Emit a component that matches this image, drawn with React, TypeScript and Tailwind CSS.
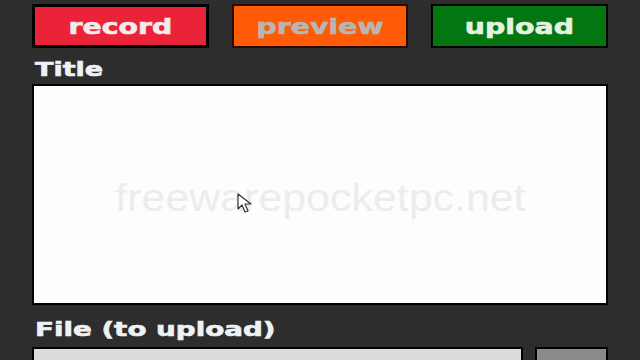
const btn = 'h-[44px] text-[21px] font-bold leading-none pt-[2px] [-webkit-text-stroke:0.6px_currentColor]';

const ButtonBar = () => (
  <div className="grid grid-cols-3 gap-[23px]">
    <button className={`${btn} bg-[#ea2338] border-[3px] border-black text-[#f2ecec]`}>
      <span className="inline-block scale-x-[1.35]">record</span>
    </button>
    <button className={`${btn} bg-[#ff5a06] border-2 border-[#2a0a00] text-[#b9b5b2]`}>
      <span className="inline-block scale-x-[1.35]">preview</span>
    </button>
    <button className={`${btn} bg-[#037612] border-2 border-black text-[#e6f2e0]`}>
      <span className="inline-block scale-x-[1.35]">upload</span>
    </button>
  </div>
);

const Cursor = () => (
  <svg className="absolute left-[203px] top-[107px]" width="20" height="22" viewBox="0 0 20 22">
    <path d="M1 1 L1 16 L5 12 L8 19 L11 18 L8 11 L14 11 Z" fill="#fff" stroke="#333" strokeWidth="1.2" strokeLinejoin="round" />
  </svg>
);

const label = 'pl-[3px] text-[19px] font-bold text-[#eef2f4] leading-[24px] [-webkit-text-stroke:0.6px_currentColor]';

export default function App() {
  return (
    <div
      className="w-[640px] h-[360px] overflow-hidden bg-[#2d2d2d] px-[32px] pt-[4px]"
      style={{ fontFamily: '"DejaVu Sans", Verdana, sans-serif' }}
    >
      <ButtonBar />

      <div className={`mt-[9px] ${label}`}>
        <span className="inline-block origin-left scale-x-[1.42]">Title</span>
      </div>
      <div className="relative mt-[3px] h-[221px] bg-[#fdfdfd] border-2 border-black flex items-center justify-center">
        <span
          className="inline-block text-[39px] text-[#ececec] mt-[8px] scale-x-[1.1]"
          style={{ fontFamily: '"Liberation Sans", Arial, sans-serif' }}
        >
          freewarepocketpc.net
        </span>
        <Cursor />
      </div>

      <div className={`mt-[12px] ${label}`}>
        <span className="inline-block origin-left scale-x-[1.46]">File (to upload)</span>
      </div>
      <div className="mt-[6px] flex gap-[12px]">
        <div className="flex-1 h-[30px] bg-[#dcdcdc] border-2 border-black" />
        <div className="w-[73px] h-[30px] bg-[#8a8a8a] border-2 border-black" />
      </div>
    </div>
  );
}
